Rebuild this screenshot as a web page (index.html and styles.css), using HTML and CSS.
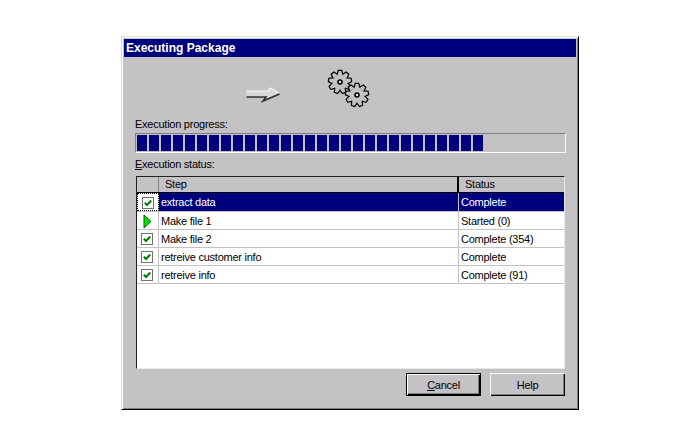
FILE: index.html
```html
<!DOCTYPE html>
<html lang="en">
<head>
<meta charset="utf-8">
<title>Executing Package</title>
<link rel="stylesheet" href="styles.css">
</head>
<body>
<svg class="defs" width="0" height="0" aria-hidden="true">
  <defs>
    <g id="gear-shape">
      <circle r="7.400"/>
      <path id="tooth" d="M-2.400-7-1.300-11H1.300L2.400-7Z"/>
      <use href="#tooth" transform="rotate(40)"/>
      <use href="#tooth" transform="rotate(80)"/>
      <use href="#tooth" transform="rotate(120)"/>
      <use href="#tooth" transform="rotate(160)"/>
      <use href="#tooth" transform="rotate(200)"/>
      <use href="#tooth" transform="rotate(240)"/>
      <use href="#tooth" transform="rotate(280)"/>
      <use href="#tooth" transform="rotate(320)"/>
    </g>
    <g id="gear">
      <use href="#gear-shape" class="gear-line"/>
      <use href="#gear-shape" class="gear-fill"/>
      <circle r="2" class="gear-hole"/>
    </g>
    <g id="check">
      <rect x="0.5" y="0.5" width="11" height="11" class="check-box"/>
      <path d="M2.800 5.800 5 8 9.200 3.500" class="check-mark"/>
    </g>
  </defs>
</svg>
<main class="dialog">
  <header class="titlebar">Executing Package</header>
  <div class="art">
    <svg class="art-svg" width="126" height="54" viewBox="0 0 126 54" aria-hidden="true">
      <path d="M0.500 28H22L24 25 34 31 17 38 20 34H0.500Z" class="arrow-body"/>
      <path d="M0.500 28H22L24 25 33 30" class="arrow-light"/>
      <path d="M0.500 34H20L17 38 33.500 31" class="arrow-dark"/>
      <use href="#gear" x="94" y="19"/>
      <use href="#gear" x="111" y="32"/>
    </svg>
  </div>
  <div class="field-label">Execution progress:</div>
  <div class="progress">
    <span class="block"></span><span class="block"></span><span class="block"></span><span class="block"></span><span class="block"></span><span class="block"></span><span class="block"></span><span class="block"></span><span class="block"></span><span class="block"></span>
    <span class="block"></span><span class="block"></span><span class="block"></span><span class="block"></span><span class="block"></span><span class="block"></span><span class="block"></span><span class="block"></span><span class="block"></span><span class="block"></span>
    <span class="block"></span><span class="block"></span><span class="block"></span><span class="block"></span><span class="block"></span><span class="block"></span><span class="block"></span><span class="block"></span><span class="block"></span>
  </div>
  <div class="field-label status-label"><u>E</u>xecution status:</div>
  <section class="list">
    <div class="head">
      <div class="hcell c-icon"></div>
      <div class="hcell c-step">Step</div>
      <div class="hcell c-status">Status</div>
    </div>
    <div class="row selected">
      <div class="cell c-icon focus"><svg class="ico" width="12" height="12"><use href="#check"/></svg></div>
      <div class="cell c-step">extract data</div>
      <div class="cell c-status">Complete</div>
    </div>
    <div class="row">
      <div class="cell c-icon"><svg class="ico" width="12" height="15"><path d="M3 1 10 7.500 3 14Z" class="play"/></svg></div>
      <div class="cell c-step">Make file 1</div>
      <div class="cell c-status">Started (0)</div>
    </div>
    <div class="row">
      <div class="cell c-icon"><svg class="ico" width="12" height="12"><use href="#check"/></svg></div>
      <div class="cell c-step">Make file 2</div>
      <div class="cell c-status">Complete (354)</div>
    </div>
    <div class="row">
      <div class="cell c-icon"><svg class="ico" width="12" height="12"><use href="#check"/></svg></div>
      <div class="cell c-step">retreive customer info</div>
      <div class="cell c-status">Complete</div>
    </div>
    <div class="row">
      <div class="cell c-icon"><svg class="ico" width="12" height="12"><use href="#check"/></svg></div>
      <div class="cell c-step">retreive info</div>
      <div class="cell c-status">Complete (91)</div>
    </div>
  </section>
  <footer class="actions">
    <button class="btn default" type="button"><u>C</u>ancel</button>
    <button class="btn" type="button">Help</button>
  </footer>
</main>
</body>
</html>
```
FILE: styles.css
```css
* { box-sizing: border-box; }
html, body { margin: 0; height: 100%; background: #fff; overflow: hidden; }
body {
  padding: 36px 0 0 121px;
  font: 11px/14px "Liberation Sans", Arial, sans-serif;
  letter-spacing: -.25px;
  color: #000;
}
.defs { position: absolute; }
.dialog {
  width: 458px;
  height: 374px;
  background: #c4c2c4;
  border: 1px solid;
  border-color: #dcdcdc #000 #000 #dcdcdc;
  box-shadow: inset 1px 1px 0 #fff, inset -1px -1px 0 #808080;
  padding: 2px 2px 0;
}
.titlebar {
  height: 18px;
  background: #00007f;
  color: #fff;
  font: bold 12px/18px "Liberation Sans", Arial, sans-serif;
  letter-spacing: 0;
  padding-left: 2px;
}
.art { height: 60px; padding: 6px 0 0 122px; }
.art-svg { display: block; }
.arrow-body { fill: #d8d8d8; }
.arrow-light { fill: none; stroke: #f8f8f8; stroke-width: 1.2; }
.arrow-dark { fill: none; stroke: #303030; stroke-width: 1.6; }
.gear-line { fill: #000; stroke: #000; stroke-width: 2.4; stroke-linejoin: miter; }
.gear-fill { fill: #c4c2c4; stroke: none; }
.gear-hole { fill: #e8e8e8; stroke: #000; stroke-width: 1.6; }
.field-label { height: 16px; padding-left: 11px; line-height: 14px; }
.status-label { margin-top: 4px; }
.progress {
  width: 431px;
  height: 20px;
  margin-left: 11px;
  display: flex;
  gap: 2px;
  padding: 1px;
  border: 1px solid;
  border-color: #808080 #fff #fff #808080;
}
.block { width: 10px; height: 16px; background: #00007f; }
.list {
  width: 429px;
  height: 193px;
  margin: 3px 0 0 12px;
  background: #fff;
  border: 1px solid;
  border-color: #202020 #e8e8e8 #e8e8e8 #202020;
}
.head { display: flex; height: 16px; background: #c4c2c4; border-bottom: 1px solid #000; }
.hcell { line-height: 15px; }
.c-icon { width: 22px; flex: none; }
.c-step { width: 300px; flex: none; }
.c-status { flex: 1; }
.hcell.c-icon { border-right: 1px solid #808080; }
.hcell.c-step { padding-left: 6px; border-right: 2px solid #000; }
.hcell.c-status { padding-left: 6px; }
.row { display: flex; height: 18px; border-bottom: 1px solid #c4c2c4; }
.row.selected { height: 19px; }
.cell { line-height: 19px; border-right: 1px solid #c4c2c4; padding-left: 2px; white-space: nowrap; }
.cell.c-status { border-right: 0; padding-left: 2px; }
.cell.c-icon { display: flex; align-items: center; justify-content: center; padding: 1px 1px 0 0; }
.selected .c-step, .selected .c-status { background: #00007f; color: #fff; }
.selected .c-icon { border: 1px dotted #000; }
.ico { display: block; }
.check-box { fill: #fff; stroke: #707070; }
.check-mark { fill: none; stroke: #008000; stroke-width: 2; }
.play { fill: #00e000; stroke: #006000; stroke-width: 1; }
.actions { display: flex; gap: 9px; margin: 4px 0 0 282px; }
.btn {
  width: 75px;
  height: 23px;
  padding: 0;
  font: inherit;
  letter-spacing: inherit;
  color: #000;
  background: #c4c2c4;
  border: 0;
  box-shadow: inset 1px 1px 0 #fff, inset -1px -1px 0 #000, inset -2px -2px 0 #808080;
}
.btn.default {
  outline: 1px solid #000;
  outline-offset: -1px;
  box-shadow: inset 2px 2px 0 #fff, inset -2px -2px 0 #000, inset -3px -3px 0 #808080;
}
```
